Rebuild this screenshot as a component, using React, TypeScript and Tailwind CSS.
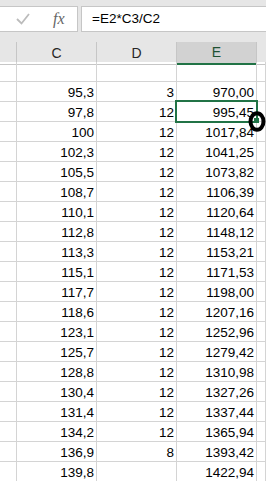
const rows: [string, string, string][] = [
  ["95,3", "3", "970,00"],
  ["97,8", "12", "995,45"],
  ["100", "12", "1017,84"],
  ["102,3", "12", "1041,25"],
  ["105,5", "12", "1073,82"],
  ["108,7", "12", "1106,39"],
  ["110,1", "12", "1120,64"],
  ["112,8", "12", "1148,12"],
  ["113,3", "12", "1153,21"],
  ["115,1", "12", "1171,53"],
  ["117,7", "12", "1198,00"],
  ["118,6", "12", "1207,16"],
  ["123,1", "12", "1252,96"],
  ["125,7", "12", "1279,42"],
  ["128,8", "12", "1310,98"],
  ["130,4", "12", "1327,26"],
  ["131,4", "12", "1337,44"],
  ["134,2", "12", "1365,94"],
  ["136,9", "8", "1393,42"],
  ["139,8", "", "1422,94"],
];

const cols = "grid grid-cols-[17px_80px_80px_80px_1fr]";

function Cell({ value }: { value?: string }) {
  return (
    <div className="flex h-[20px] items-end justify-end border-r border-b border-[#d4d4d4] pr-[2px] pb-[2px] text-[13.5px] leading-none text-black">
      {value}
    </div>
  );
}

export default function App() {
  return (
    <div className="relative h-[481px] w-[266px] overflow-hidden bg-white font-['Liberation_Sans',Arial,sans-serif]">
      {/* formula bar */}
      <div className="flex h-[42px] gap-[3px] bg-[#e6e6e6] pt-[6px]">
        <div className="flex h-[26px] w-[78px] shrink-0 items-center border-y border-r border-[#c6c6c6] bg-white">
          <svg width="14" height="12" viewBox="0 0 14 12" className="ml-[16px]">
            <polyline points="1,6 5.5,10.5 13,1" fill="none" stroke="#bcbcbc" strokeWidth="1.8" />
          </svg>
          <span className="ml-[23px] font-['Liberation_Serif',serif] text-[16px] italic text-[#666666]">
            fx
          </span>
        </div>
        <div className="flex h-[26px] flex-1 items-center border-y border-l border-[#c6c6c6] bg-white pl-[10px] text-[13.5px] text-black">
          =E2*C3/C2
        </div>
      </div>

      {/* column headers */}
      <div className={`${cols} h-[20px] bg-[#e6e6e6] text-[14px] text-[#262626]`}>
        <div className="border-r border-b border-[#c6c6c6]" />
        <div className="flex items-center justify-center border-r border-b border-[#c6c6c6]">C</div>
        <div className="flex items-center justify-center border-r border-b border-[#c6c6c6]">D</div>
        <div className="flex items-center justify-center border-r border-b-2 border-r-[#c6c6c6] border-b-[#217346] bg-[#d2d2d2] text-[#1f5132]">
          E
        </div>
        <div className="border-b border-[#c6c6c6]" />
      </div>

      {/* sheet */}
      <div className={cols}>
        <Cell />
        <Cell />
        <Cell />
        <Cell />
        <Cell />
        {rows.map(([c, d, e], i) => (
          <div key={i} className="contents">
            <Cell />
            <Cell value={c} />
            <Cell value={d} />
            <Cell value={e} />
            <Cell />
          </div>
        ))}
      </div>

      {/* active cell */}
      <div className="absolute top-[100px] left-[175px] h-[23px] w-[83px] border-2 border-[#217346]" />
      <div className="absolute top-[118px] left-[254px] h-[5px] w-[5px] bg-[#217346]" />
      <svg className="absolute top-[111px] left-[248px]" width="18" height="21" viewBox="0 0 18 21">
        <ellipse cx="9" cy="10.5" rx="6.5" ry="8.3" fill="none" stroke="#000" strokeWidth="4" />
      </svg>
    </div>
  );
}
